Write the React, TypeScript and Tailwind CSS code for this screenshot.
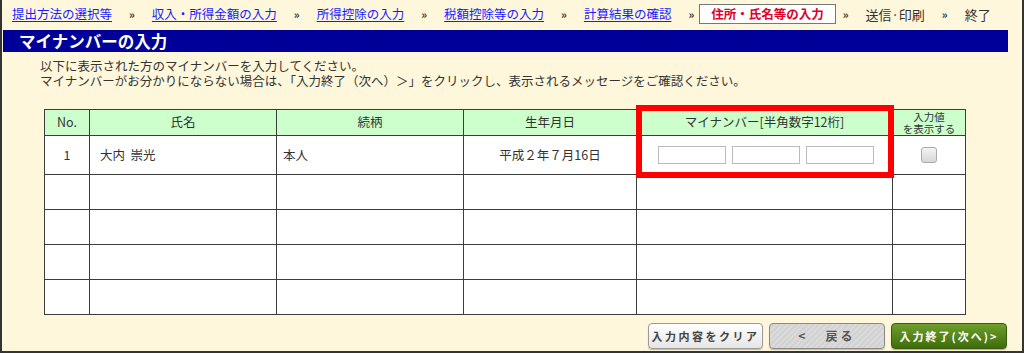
import React from 'react'

const crumbs = [
  { label: '提出方法の選択等', kind: 'link' },
  { label: '収入・所得金額の入力', kind: 'link' },
  { label: '所得控除の入力', kind: 'link' },
  { label: '税額控除等の入力', kind: 'link' },
  { label: '計算結果の確認', kind: 'link' },
  { label: '住所・氏名等の入力', kind: 'current' },
  { label: '送信·印刷', kind: 'plain' },
  { label: '終了', kind: 'plain' },
]

const cell = 'border-r border-b border-[#3c3c3c] flex items-center'

const App: React.FC = () => {
  return (
    <div
      className="w-[1024px] h-[353px] overflow-hidden bg-[#fef7dc] border-x-2 border-b-2 border-[#333] text-[#333]"
      style={{ fontFamily: '"Noto Sans CJK JP", "Noto Sans", sans-serif' }}
    >
      {/* Breadcrumb */}
      <div className="h-[28px] flex items-center pl-[10px] text-[12.5px] leading-none">
        {crumbs.map((c, i) => (
          <React.Fragment key={c.label}>
            {i > 0 && <span className="mx-[17px] text-[11px] font-bold text-[#333]">»</span>}
            {c.kind === 'link' && <span className="text-[#1a1aff] underline underline-offset-2">{c.label}</span>}
            {c.kind === 'current' && (
              <span className="-mx-[12px] mr-[-10px] h-[20px] px-[11px] flex items-center bg-white border border-[#777] text-[#e0002a] font-bold">
                {c.label}
              </span>
            )}
            {c.kind === 'plain' && <span className="text-[#333] text-[13px]">{c.label}</span>}
          </React.Fragment>
        ))}
      </div>

      {/* Title bar */}
      <div className="mt-[2px] ml-[1px] w-[1005px] h-[22px] bg-[#000099] flex items-center pl-[16px]">
        <span className="text-white text-[16.5px] font-bold leading-none">マイナンバーの入力</span>
      </div>

      {/* Instructions */}
      <div className="mt-[6px] pl-[38px] text-[12.5px] leading-[15px]">
        <p>以下に表示された方のマイナンバーを入力してください。</p>
        <p>マイナンバーがお分かりにならない場合は、「入力終了（次へ）＞」をクリックし、表示されるメッセージをご確認ください。</p>
      </div>

      {/* Table */}
      <div className="relative mt-[21px] ml-[42px] w-[922px] border-l border-t border-[#3c3c3c] grid grid-cols-[45px_187px_187px_173px_256px_73px] text-[12.5px]">
        {/* header */}
        <div className={`${cell} h-[26px] bg-[#ccffcc] justify-center`}>No.</div>
        <div className={`${cell} bg-[#ccffcc] justify-center`}>氏名</div>
        <div className={`${cell} bg-[#ccffcc] justify-center`}>続柄</div>
        <div className={`${cell} bg-[#ccffcc] justify-center`}>生年月日</div>
        <div className={`${cell} bg-[#ccffcc] justify-center`}>マイナンバー[半角数字12桁]</div>
        <div className={`${cell} bg-[#ccffcc] flex-col justify-center text-[10.5px] leading-[11.5px]`}>
          <span>入力値</span>
          <span>を表示する</span>
        </div>

        {/* row 1 */}
        <div className={`${cell} h-[39px] bg-white justify-center`}>1</div>
        <div className={`${cell} bg-white pl-[10px]`}>大内&nbsp;&nbsp;崇光</div>
        <div className={`${cell} bg-white pl-[6px]`}>本人</div>
        <div className={`${cell} bg-white justify-center`}>平成２年７月16日</div>
        <div className={`${cell} bg-white justify-center gap-[6px] pl-[2px]`}>
          <div className="w-[68px] h-[18px] bg-white border border-[#bbb]" />
          <div className="w-[68px] h-[18px] bg-white border border-[#bbb]" />
          <div className="w-[68px] h-[18px] bg-white border border-[#bbb]" />
        </div>
        <div className={`${cell} bg-white justify-center`}>
          <div className="w-[16px] h-[16px] rounded-[3px] border border-[#aaa] bg-gradient-to-b from-[#f4f4f4] to-[#d6d6d6]" />
        </div>

        {/* empty rows */}
        {[0, 1, 2, 3].map((r) => (
          <React.Fragment key={r}>
            <div className={`${cell} h-[35px] bg-white`} />
            <div className={`${cell} bg-white`} />
            <div className={`${cell} bg-white`} />
            <div className={`${cell} bg-white`} />
            <div className={`${cell} bg-white`} />
            <div className={`${cell} bg-white`} />
          </React.Fragment>
        ))}

        {/* highlight frame */}
        <div className="absolute left-[591px] top-[-5px] w-[258px] h-[73px] border-[6px] border-[#ff0000] pointer-events-none" />
      </div>

      {/* Buttons */}
      <div className="mt-[8px] pr-[15px] flex justify-end gap-[6px]">
        <button className="w-[115px] h-[26px] rounded-[4px] border border-[#9a9a9a] bg-gradient-to-b from-white to-[#e6e6e6] shadow-[0_1px_1px_rgba(0,0,0,0.25)] text-[11px] font-bold tracking-[2.5px] text-[#444]">
          入力内容をクリア
        </button>
        <button className="w-[116px] h-[26px] rounded-[4px] border border-[#8a8a8a] bg-[repeating-linear-gradient(135deg,#dadada_0px,#dadada_2px,#d2d2d2_2px,#d2d2d2_4px)] shadow-[0_1px_1px_rgba(0,0,0,0.25)] text-[12px] font-bold tracking-[3px] text-[#555]">
          &lt;&nbsp;&nbsp;&nbsp;戻る
        </button>
        <button className="w-[116px] h-[26px] rounded-[4px] border border-[#3a5c0c] bg-gradient-to-b from-[#6f9f2b] to-[#3f6d0c] shadow-[0_1px_1px_rgba(0,0,0,0.3)] text-[11px] font-bold tracking-[2px] text-white">
          入力終了(次へ)&gt;
        </button>
      </div>
    </div>
  )
}

export default App
